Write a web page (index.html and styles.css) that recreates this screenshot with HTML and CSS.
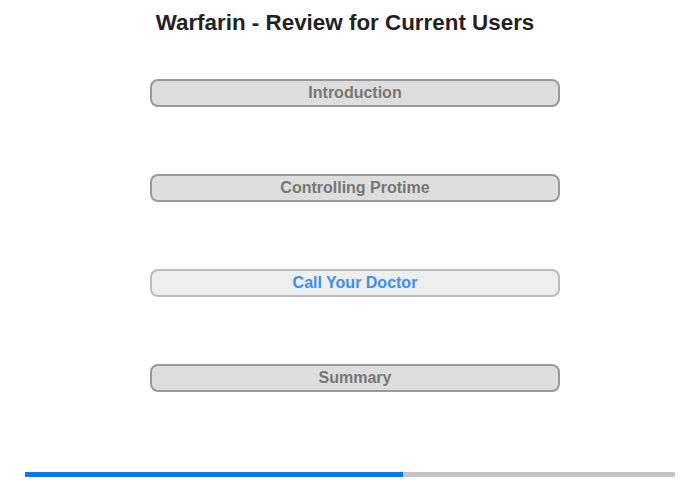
FILE: index.html
```html
<!DOCTYPE html>
<html lang="en">
<head>
  <meta charset="UTF-8" />
  <title>Warfarin - Review for Current Users</title>
  <link rel="stylesheet" href="styles.css">
</head>
<body>

  <h1>Warfarin - Review for Current Users</h1>

  <nav class="menu">
    <button class="menu-item">Introduction</button>
    <button class="menu-item">Controlling Protime</button>
    <button class="menu-item active">Call Your Doctor</button>
    <button class="menu-item">Summary</button>
  </nav>

  <div class="progress">
    <div class="progress-fill" style="width: 58.2%;"></div>
  </div>

</body>
</html>
```

FILE: styles.css
```css
body {
  font-family: 'Liberation Sans', Arial, sans-serif;
  background-color: #fff;
  margin: 0;
  padding: 0;
  width: 700px;
  height: 480px;
  overflow: hidden;
}

h1 {
  font-size: 22.4px;
  line-height: 25px;
  color: #222;
  text-align: center;
  margin: 0;
  padding: 10px 10px 0 0;
}

.menu {
  width: 410px;
  margin: 44px 0 0 150px;
  display: flex;
  flex-direction: column;
  gap: 67px;
}

.menu-item {
  display: block;
  width: 100%;
  height: 28px;
  margin: 0;
  padding: 0;
  border: 2px solid #999;
  border-radius: 8px;
  background-color: #ddd;
  color: #777;
  font-family: inherit;
  font-size: 16px;
  font-weight: bold;
  cursor: pointer;
}

.menu-item.active {
  background-color: #eee;
  border-color: #bbb;
  color: #3b8ff0;
}

.progress {
  margin: 80px 25px 0;
  height: 5px;
  background-color: #c4c4c4;
}

.progress-fill {
  height: 100%;
  background-color: #007bff;
}
```
